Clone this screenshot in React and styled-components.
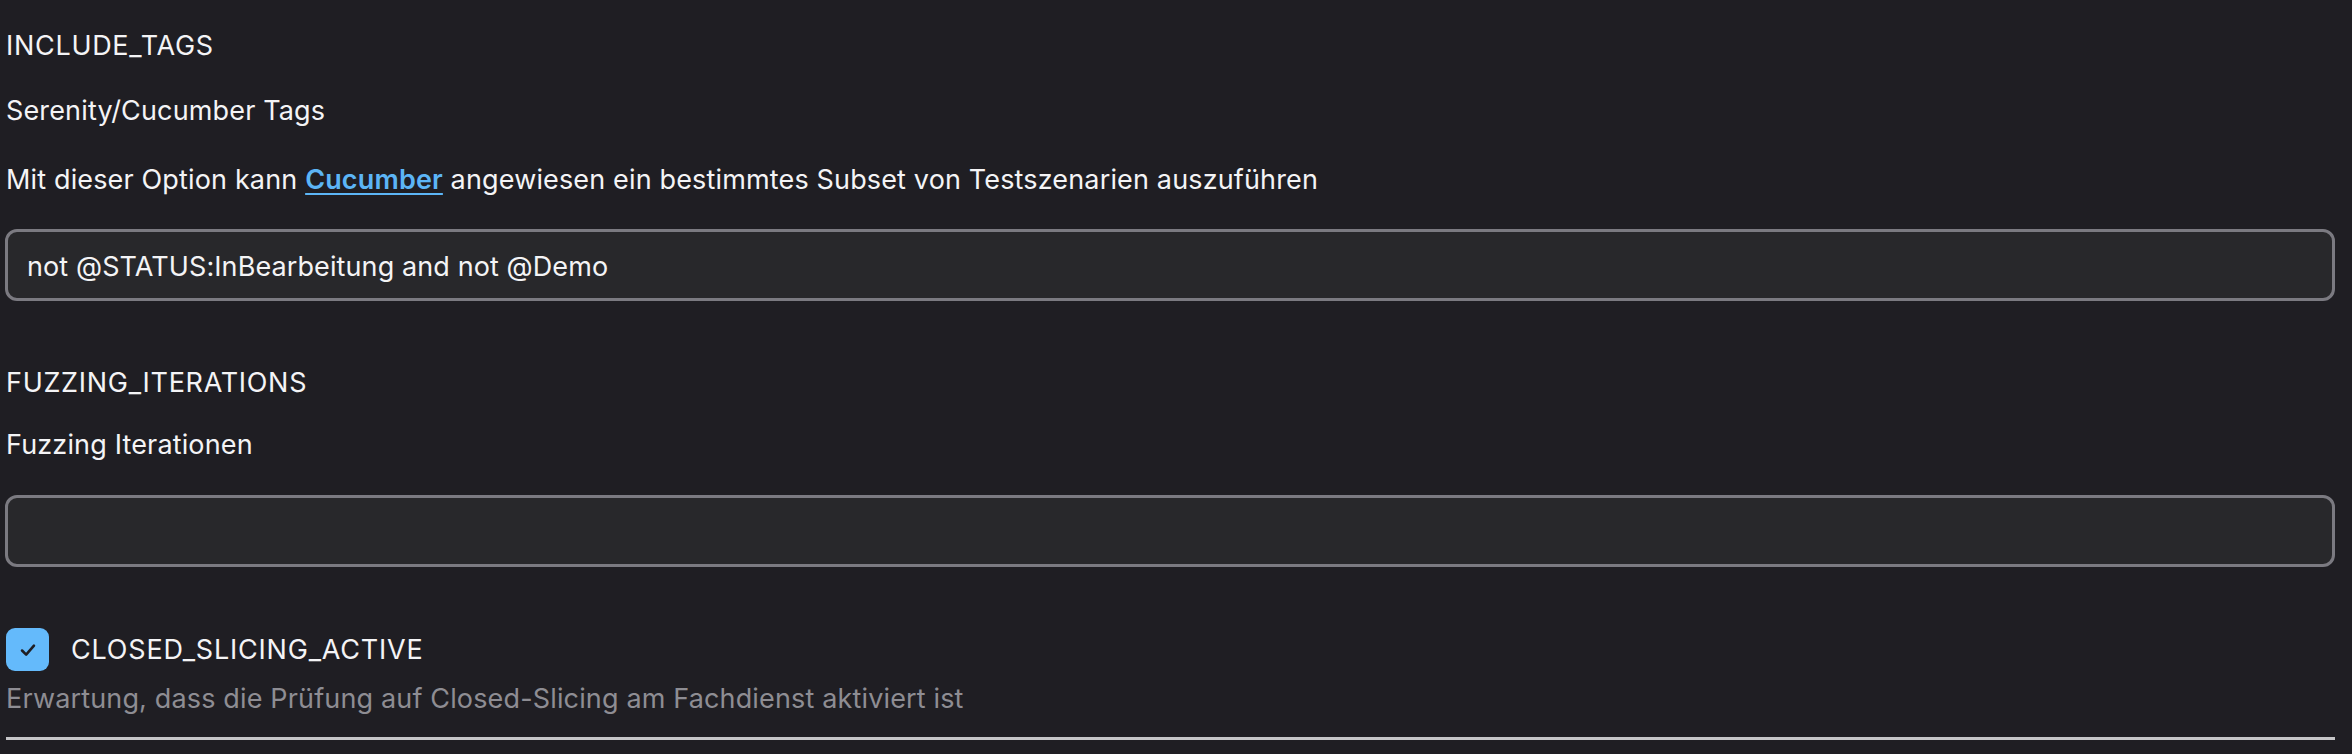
import React, { useState } from 'react';
import styled, { createGlobalStyle } from 'styled-components';

const GlobalStyle = createGlobalStyle`
html, body {
    margin: 0;
    padding: 0;
    background: #1f1e23;
}
body {
    font-family: Inter, "Noto Sans", sans-serif;
    color: #f4f4f6;
}
`;

const Page = styled.div`
padding: 26px 17px 0 5px;
display: flex;
flex-direction: column;
`;

const Field = styled.section`
display: flex;
flex-direction: column;
margin-bottom: ${props => props.$gap || 62}px;
`;

const Name = styled.div`
font-size: 27px;
line-height: 40px;
letter-spacing: 0.7px;
margin-bottom: ${props => props.$gap || 25}px;
padding-left: 1px;
`;

const Text = styled.p`
margin: 0 0 ${props => props.$gap || 30}px;
font-size: 27px;
line-height: 40px;
letter-spacing: 0.15px;
padding-left: 1px;
a {
    color: #5cb5f6;
    font-weight: 600;
    text-decoration: underline;
    text-underline-offset: 4px;
    text-decoration-thickness: 2px;
}
`;

const Input = styled.input`
box-sizing: border-box;
width: 100%;
height: 72px;
padding: 2px 20px 0 19px;
background: #28282b;
border: 3px solid #7b7a81;
border-radius: 12px;
color: #f4f4f6;
font-family: Inter, "Noto Sans", sans-serif;
font-size: 27px;
letter-spacing: 0.1px;
outline: none;
`;

const CheckRow = styled.label`
display: flex;
align-items: center;
gap: 22px;
height: 43px;
padding-left: 1px;
cursor: pointer;
`;

const Box = styled.span`
width: 43px;
height: 43px;
flex: none;
border-radius: 9px;
background: ${props => (props.$on ? '#64bafb' : 'transparent')};
border: ${props => (props.$on ? 'none' : '3px solid #7b7a81')};
box-sizing: border-box;
display: flex;
align-items: center;
justify-content: center;
svg {
    width: 26px;
    height: 26px;
}
`;

const CheckLabel = styled.span`
font-size: 27px;
line-height: 40px;
letter-spacing: 0.8px;
margin-top: 1px;
`;

const Hint = styled.div`
font-size: 27px;
line-height: 40px;
letter-spacing: 0.15px;
color: #8e8d93;
margin-top: 8px;
padding-left: 1px;
`;

const Rule = styled.div`
height: 3px;
margin: 18px 0 0 1px;
background: #c6c6c8;
`;

const Check = () => (
    <svg viewBox="0 0 24 24" fill="none" stroke="#1f1e23" strokeWidth="2.4" strokeLinecap="round" strokeLinejoin="round">
        <path d="M6.5 12.5l3.8 3.8L17.5 8" />
    </svg>
);

const App = () => {
    const [tags, setTags] = useState('not @STATUS:InBearbeitung and not @Demo');
    const [iterations, setIterations] = useState('');
    const [slicing, setSlicing] = useState(true);

    return (
        <Page>
            <GlobalStyle />
            <Field>
                <Name>INCLUDE_TAGS</Name>
                <Text $gap={29}>Serenity/Cucumber Tags</Text>
                <Text $gap={29}>
                    Mit dieser Option kann <a href="#cucumber">Cucumber</a> angewiesen ein bestimmtes Subset von Testszenarien auszuführen
                </Text>
                <Input value={tags} onChange={e => setTags(e.target.value)} />
            </Field>
            <Field $gap={61}>
                <Name $gap={22}>FUZZING_ITERATIONS</Name>
                <Text $gap={30}>Fuzzing Iterationen</Text>
                <Input value={iterations} onChange={e => setIterations(e.target.value)} />
            </Field>
            <Field $gap={1}>
                <CheckRow onClick={() => setSlicing(!slicing)}>
                    <Box $on={slicing}>{slicing && <Check />}</Box>
                    <CheckLabel>CLOSED_SLICING_ACTIVE</CheckLabel>
                </CheckRow>
                <Hint>Erwartung, dass die Prüfung auf Closed-Slicing am Fachdienst aktiviert ist</Hint>
                <Rule />
            </Field>
        </Page>
    );
};

export default App;
